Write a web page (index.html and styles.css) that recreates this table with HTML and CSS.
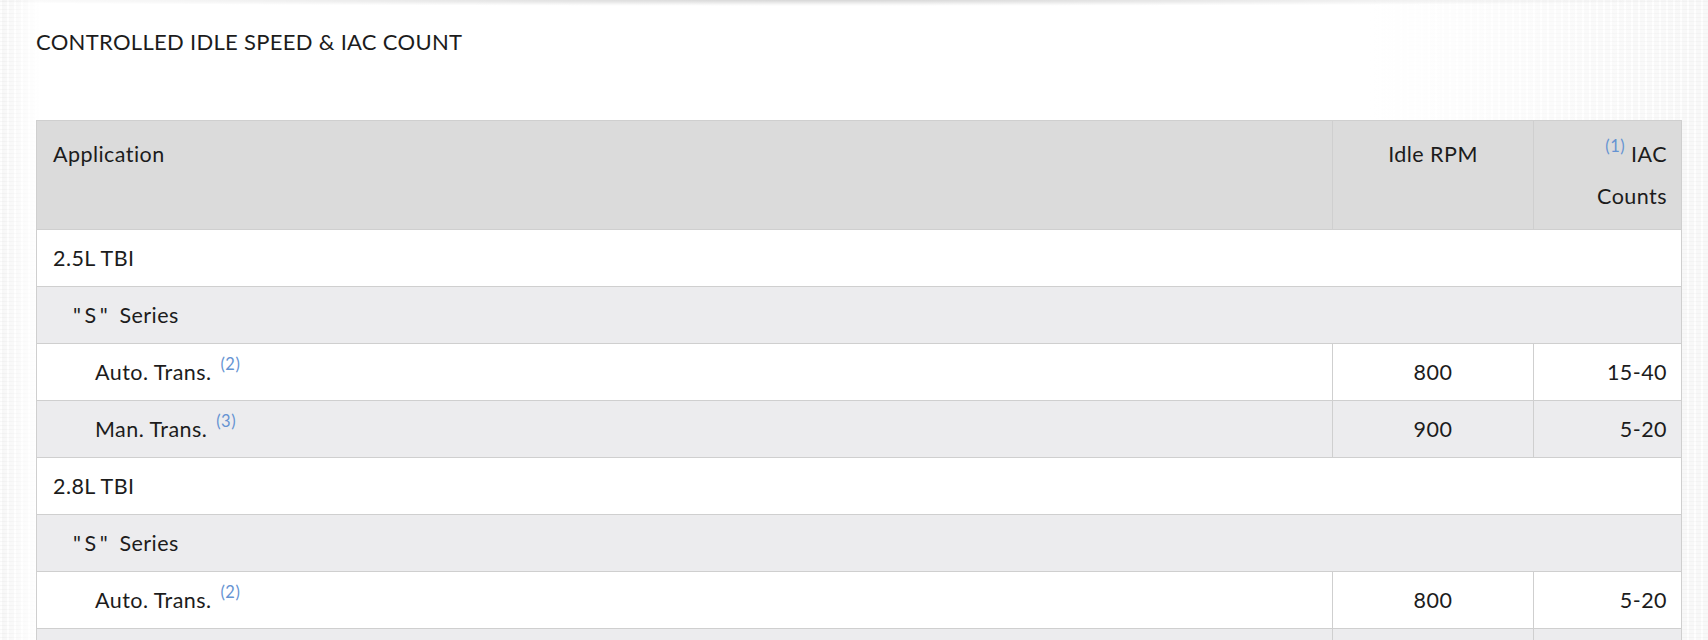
FILE: index.html
```html
<!DOCTYPE html>
<html lang="en">
<head>
<meta charset="utf-8">
<title>Controlled Idle Speed &amp; IAC Count</title>
<link rel="stylesheet" href="styles.css">
</head>
<body>
<div class="page">
  <div class="shade"></div>
  <h1 class="title">CONTROLLED IDLE SPEED &amp; IAC COUNT</h1>
  <table class="spec">
    <colgroup>
      <col class="c-app">
      <col class="c-rpm">
      <col class="c-iac">
    </colgroup>
    <thead>
      <tr>
        <th class="left">Application</th>
        <th class="center">Idle RPM</th>
        <th class="right"><sup class="ref">(1)</sup> IAC Counts</th>
      </tr>
    </thead>
    <tbody>
      <tr><td class="lvl0" colspan="3">2.5L TBI</td></tr>
      <tr><td class="lvl1" colspan="3">&quot;&#8201;S&#8201;&quot;&#8194;Series</td></tr>
      <tr><td class="lvl2">Auto. Trans. <sup class="ref">(2)</sup></td><td class="center">800</td><td class="right">15-40</td></tr>
      <tr><td class="lvl2">Man. Trans. <sup class="ref">(3)</sup></td><td class="center">900</td><td class="right">5-20</td></tr>
      <tr><td class="lvl0" colspan="3">2.8L TBI</td></tr>
      <tr><td class="lvl1" colspan="3">&quot;&#8201;S&#8201;&quot;&#8194;Series</td></tr>
      <tr><td class="lvl2">Auto. Trans. <sup class="ref">(2)</sup></td><td class="center">800</td><td class="right">5-20</td></tr>
      <tr><td class="lvl2">Man. Trans. <sup class="ref">(3)</sup></td><td class="center">850</td><td class="right">5-20</td></tr>
    </tbody>
  </table>
</div>
</body>
</html>
```
FILE: styles.css
```css
html, body {
  margin: 0;
  padding: 0;
}
body {
  font-family: "Lato", "Liberation Sans", sans-serif;
  color: #1c1c1c;
  background-color: #f3f3f3;
  background-image:
    repeating-linear-gradient(0deg, rgba(0,0,0,0.04) 0 1px, transparent 1px 4px),
    repeating-linear-gradient(90deg, rgba(255,255,255,0.9) 0 2px, transparent 2px 7px);
  overflow: hidden;
}
.page {
  min-height: 640px;
  padding: 0 26px 40px 36px;
  background: linear-gradient(90deg, rgba(255,255,255,0.3) 0, #fff 40px, #fff calc(100% - 340px), rgba(255,255,255,0.45) calc(100% - 22px));
}
.shade {
  height: 6px;
  margin: 0 -26px 0 -36px;
  background: radial-gradient(ellipse 55% 100% at 48% 0, rgba(0,0,0,0.16), rgba(0,0,0,0.04) 70%, rgba(0,0,0,0) 100%);
}
.title {
  margin: 23px 0 0;
  font-size: 22px;
  line-height: 26px;
  font-weight: 400;
  letter-spacing: 0.3px;
}
.spec {
  margin-top: 65px;
  width: 100%;
  table-layout: fixed;
  border-collapse: collapse;
  font-size: 21.5px;
  line-height: 42px;
  letter-spacing: 0.45px;
  background: #fff;
}
.c-rpm { width: 201px; }
.c-iac { width: 148px; }
.spec th,
.spec td {
  border: 1px solid #cfcfcf;
  padding: 7px 16px;
  font-weight: 400;
  vertical-align: top;
}
.spec th {
  background: #dbdbdb;
  padding: 12px 16px;
}
.spec tbody tr:nth-child(even) td {
  background: #ececee;
}
.left { text-align: left; }
.center { text-align: center; }
.spec .right { text-align: right; padding-right: 14px; }
.spec .lvl1 { padding-left: 36px; }
.spec .lvl2 { padding-left: 58px; }
.ref {
  color: #6593d2;
  font-size: 16.5px;
  letter-spacing: 0.5px;
  line-height: 1;
  vertical-align: 10px;
  margin-left: 3px;
}
```
